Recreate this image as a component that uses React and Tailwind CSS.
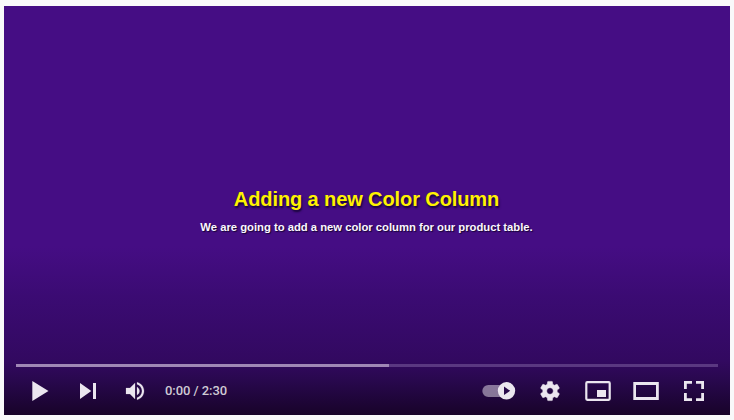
function Icon({ label, children }) {
  return (
    <button aria-label={label} className="h-12 w-12 shrink-0">
      <svg viewBox="0 0 48 48" className="h-12 w-12" fill="#ebe6ef">
        {children}
      </svg>
    </button>
  );
}

function Controls() {
  return (
    <div className="flex h-12 items-center">
      <Icon label="Play">
        <path d="M16.3 14v20L32.5 24z" />
      </Icon>
      <Icon label="Next">
        <path d="M16 16v16l11.3-8zM29 16h3v16h-3z" />
      </Icon>
      <Icon label="Mute">
        <path
          transform="translate(11 12)"
          stroke="#ebe6ef"
          strokeWidth=".2"
          d="M3 9v6h4l5 5V4L7 9H3zm13.5 3c0-1.77-1.02-3.29-2.5-4.03v8.05c1.48-.73 2.5-2.25 2.5-4.02zM14 3.23v2.06c2.89.86 5 3.54 5 6.71s-2.11 5.85-5 6.71v2.06c4.01-.91 7-4.49 7-8.77s-2.99-7.86-7-8.77z"
        />
      </Icon>
      <span className="mb-[2px] ml-[5px] whitespace-nowrap font-[Roboto,sans-serif] text-[13px] font-medium leading-none tracking-[-0.05px] text-[#cfcad4]">
        0:00 / 2:30
      </span>
      <div className="ml-auto flex">
        <Icon label="Autoplay">
          <rect x="4.3" y="18" width="30" height="12" rx="6" fillOpacity=".5" />
          <circle cx="28.5" cy="23.8" r="8.7" />
          <path d="M26 19.5v8.6l6.2-4.3z" fill="#28094b" />
        </Icon>
        <Icon label="Settings">
          <path
            transform="translate(12 12)"
            stroke="#ebe6ef"
            strokeWidth=".5"
            d="M19.14 12.94c.04-.3.06-.61.06-.94 0-.32-.02-.64-.07-.94l2.03-1.58c.18-.14.23-.41.12-.61l-1.92-3.32c-.12-.22-.37-.29-.59-.22l-2.39.96c-.5-.38-1.03-.7-1.62-.94L14.4 2.81c-.04-.24-.24-.41-.48-.41h-3.84c-.24 0-.43.17-.47.41l-.36 2.54c-.59.24-1.13.57-1.62.94l-2.39-.96c-.22-.08-.47 0-.59.22L2.74 8.87c-.12.21-.08.47.12.61l2.03 1.58c-.05.3-.09.63-.09.94s.02.64.07.94l-2.03 1.58c-.18.14-.23.41-.12.61l1.92 3.32c.12.22.37.29.59.22l2.39-.96c.5.38 1.03.7 1.62.94l.36 2.54c.05.24.24.41.48.41h3.84c.24 0 .44-.17.47-.41l.36-2.54c.59-.24 1.13-.56 1.62-.94l2.39.96c.22.08.47 0 .59-.22l1.92-3.32c.12-.22.07-.47-.12-.61l-2.01-1.58zM12 15.3c-1.82 0-3.3-1.48-3.3-3.3s1.48-3.3 3.3-3.3 3.3 1.48 3.3 3.3-1.48 3.3-3.3 3.3z"
          />
        </Icon>
        <Icon label="Miniplayer">
          <rect x="12.3" y="15.2" width="23.4" height="17.6" rx="1" fill="none" stroke="#ebe6ef" strokeWidth="2.2" />
          <path d="M23 23h9v7h-9z" />
        </Icon>
        <Icon label="Theater mode">
          <path fillRule="evenodd" d="M11.3 15h25.5v18H11.3zM14 18v12h20V18z" />
        </Icon>
        <Icon label="Full screen">
          <path d="M14 14h8v2.8h-5.2v5.2h-2.8zM26 14h8v8h-2.8v-5.2h-5.2zM14 26h2.8v5.2h5.2v2.8h-8zM31.2 26h2.8v8h-8v-2.8h5.2z" />
        </Icon>
      </div>
    </div>
  );
}

export default function App() {
  return (
    <main className="h-[420px] w-[734px] overflow-hidden bg-[#f9f9fa] px-1 pt-1.5">
      <section className="flex h-[409px] flex-col bg-[#450d84] bg-[linear-gradient(to_bottom,#450d84_0px,#450d84_240px,#3b0b73_290px,#320960_355px,#28084d_375px,#180329_409px)] px-3">
        <div className="flex h-[358px] flex-col items-center pt-[179px] font-['Liberation_Sans',Arial,sans-serif] font-bold">
          <h1 className="mr-px whitespace-nowrap text-[20px] leading-7 tracking-[-0.1px] text-[#fff200] [text-shadow:1px_2px_2px_#160535]">
            Adding a new Color Column
          </h1>
          <p className="mr-px mt-1.5 whitespace-nowrap text-[11.25px] leading-4 text-[#fbf7ff] [text-shadow:1px_1px_1px_#160535]">
            We are going to add a new color column for our product table.
          </p>
        </div>
        <div className="h-[3px] shrink-0 bg-[#5a3881]">
          <div className="h-full w-[373px] bg-[#a087b6]" />
        </div>
        <Controls />
      </section>
    </main>
  );
}
